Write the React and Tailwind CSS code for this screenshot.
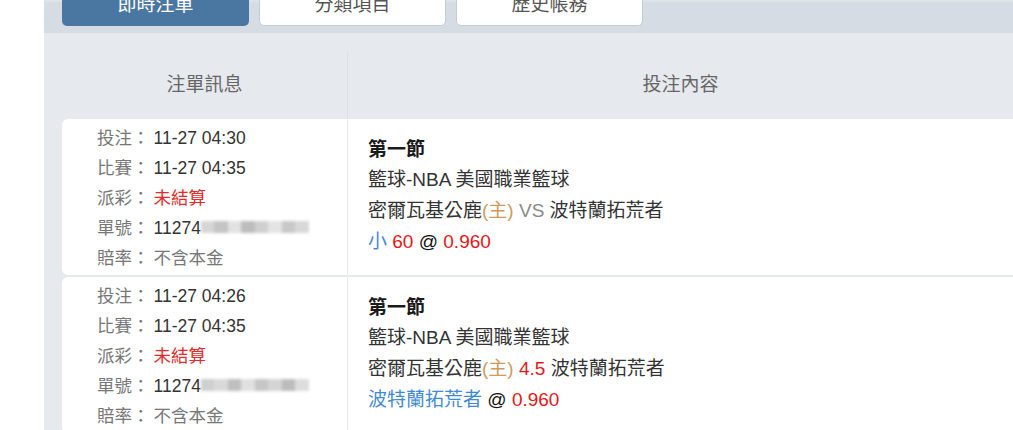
import React from "react";

const tabs = [
  { label: "即時注單", active: true },
  { label: "分類項目", active: false },
  { label: "歷史帳務", active: false },
];

const bets = [
  {
    placed: "11-27 04:30",
    match: "11-27 04:35",
    blur: ["#d6d6d6", "#c4c4c4", "#e2e2e2", "#bdbdbd", "#d0d0d0", "#e4e4e4", "#c8c8c8", "#d8d8d8"],
    line: (
      <>
        密爾瓦基公鹿<span className="text-[#d09a5c]">(主)</span>{" "}
        <span className="text-[#8a8a8a]">VS</span> 波特蘭拓荒者
      </>
    ),
    pick: (
      <>
        <span className="text-[#4a8ad4]">小</span>{" "}
        <span className="text-[#e8161b]">60</span> <span className="text-[#111]">@</span>{" "}
        <span className="text-[#e8161b]">0.960</span>
      </>
    ),
  },
  {
    placed: "11-27 04:26",
    match: "11-27 04:35",
    blur: ["#cfcfcf", "#d9d9d9", "#bfbfbf", "#e0e0e0", "#c6c6c6", "#d4d4d4", "#bcbcbc", "#dddddd"],
    line: (
      <>
        密爾瓦基公鹿<span className="text-[#d09a5c]">(主)</span>{" "}
        <span className="text-[#e8161b]">4.5</span> 波特蘭拓荒者
      </>
    ),
    pick: (
      <>
        <span className="text-[#3f8ad6]">波特蘭拓荒者</span>{" "}
        <span className="text-[#111]">@</span>{" "}
        <span className="text-[#e8161b]">0.960</span>
      </>
    ),
  },
];

function InfoLine({ label, children }) {
  return (
    <div className="h-[30px] leading-[30px] whitespace-nowrap">
      <span className="text-[#777]">{label}：</span>
      <span className="ml-[4px]">{children}</span>
    </div>
  );
}

function BetRow({ bet }) {
  return (
    <div className="grid grid-cols-[285px_1fr] h-[156px] mb-[2px] bg-white rounded-l-[6px] shrink-0">
      <div className="flex flex-col justify-center pl-[35px] pt-px text-[17.5px] text-[#333]">
        <InfoLine label="投注">{bet.placed}</InfoLine>
        <InfoLine label="比賽">{bet.match}</InfoLine>
        <InfoLine label="派彩">
          <span className="text-[#e32b2b]">未結算</span>
        </InfoLine>
        <InfoLine label="單號">
          11274
          <span className="inline-flex align-middle h-[12px] w-[108px] -mt-[3px] blur-[1.5px]">
            {bet.blur.map((c, i) => (
              <span key={i} className="flex-1 h-full" style={{ backgroundColor: c }} />
            ))}
          </span>
        </InfoLine>
        <InfoLine label="賠率">
          <span className="text-[#777]">不含本金</span>
        </InfoLine>
      </div>
      <div className="flex flex-col justify-center pl-[20px] pb-[2px] border-l border-[#e8e8e8] text-[19px] text-[#333] whitespace-nowrap">
        <div className="leading-[28px] font-bold text-[#1a1a1a]">第一節</div>
        <div className="leading-[31px]">籃球-NBA 美國職業籃球</div>
        <div className="leading-[31px]">{bet.line}</div>
        <div className="leading-[31px]">{bet.pick}</div>
      </div>
    </div>
  );
}

export default function App() {
  return (
    <div className="flex w-[1013px] h-[430px] overflow-hidden bg-white font-['Liberation_Sans','Noto_Sans_CJK_TC',sans-serif]">
      <div className="w-[44px] shrink-0 bg-white" />
      <div className="flex-1 flex flex-col bg-[#e6e9ee]">
        <div className="h-[33px] shrink-0 flex items-end gap-[10px] pl-[18px] pb-[7px] bg-[#d5dce4] border-t-2 border-[#dfe3e7]">
          {tabs.map((t) => (
            <div
              key={t.label}
              className={
                t.active
                  ? "w-[187px] h-[42px] shrink-0 flex items-center justify-center rounded-[5px] bg-[#4a77a1] text-white text-[19px]"
                  : "w-[187px] h-[42px] shrink-0 flex items-center justify-center rounded-[5px] bg-white border border-[#c5ccd5] text-[#555] text-[19px]"
              }
            >
              {t.label}
            </div>
          ))}
        </div>
        <div className="pt-[19px] pl-[18px] shrink-0">
          <div className="grid grid-cols-[285px_1fr] h-[66px] text-[19px] text-[#666]">
            <div className="flex items-center justify-center">注單訊息</div>
            <div className="flex items-center justify-center border-l border-[#dde1e6]">投注內容</div>
          </div>
        </div>
        <div className="flex flex-col pl-[18px] pt-px">
          {bets.map((b, i) => (
            <BetRow key={i} bet={b} />
          ))}
        </div>
      </div>
    </div>
  );
}
